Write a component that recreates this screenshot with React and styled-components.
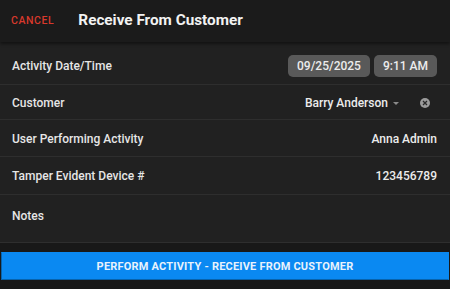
import React from "react";
import styled, { createGlobalStyle } from "styled-components";

const GlobalStyle = createGlobalStyle`
  html, body {
    margin: 0;
    padding: 0;
    background: #181818;
  }
  body {
    font-family: Roboto, "Liberation Sans", sans-serif;
    -webkit-font-smoothing: antialiased;
  }
  * {
    box-sizing: border-box;
  }
`;

const Screen = styled.div`
  width: 450px;
  height: 289px;
  display: flex;
  flex-direction: column;
  background: #181818;
  overflow: hidden;
`;

const Header = styled.header`
  height: 42px;
  flex-shrink: 0;
  display: flex;
  align-items: center;
  padding: 0 11px 2px 11px;
  gap: 24px;
  background: #1b1b1b;
  box-shadow: 0 2px 3px rgba(0, 0, 0, 0.45);
  position: relative;
  z-index: 1;
`;

const Cancel = styled.button`
  background: none;
  border: none;
  padding: 0;
  color: #d8392c;
  font-family: inherit;
  font-size: 10.5px;
  font-weight: 500;
  letter-spacing: 0.6px;
  cursor: pointer;
`;

const Title = styled.h1`
  margin: 0;
  color: #f2f2f2;
  font-size: 15.3px;
  font-weight: 700;
`;

const List = styled.div`
  background: #212121;
`;

const Row = styled.div`
  display: flex;
  align-items: ${({ $top }) => ($top ? "flex-start" : "center")};
  justify-content: space-between;
  height: ${({ $h }) => $h}px;
  padding: ${({ $pt = 2 }) => $pt}px 13px ${({ $pb = 0 }) => $pb}px 12px;
  border-bottom: 1px solid #2e2e2e;
`;

const Label = styled.span`
  color: #e6e6e6;
  font-size: 12px;
  font-weight: 500;
`;

const Value = styled.span`
  color: #ececec;
  font-size: 12px;
  font-weight: 500;
`;

const Chips = styled.div`
  display: flex;
  gap: 4px;
`;

const Chip = styled.span`
  height: 22px;
  display: flex;
  align-items: center;
  justify-content: center;
  padding: 0 9px;
  border-radius: 5px;
  background: #595959;
  color: #ececec;
  font-size: 12px;
  font-weight: 500;
`;

const Picker = styled.div`
  display: flex;
  align-items: center;
`;

const Caret = styled.span`
  width: 0;
  height: 0;
  margin-left: 5px;
  border-left: 3px solid transparent;
  border-right: 3px solid transparent;
  border-top: 3.5px solid #8a8a8a;
`;

const Clear = styled.span`
  width: 10px;
  height: 10px;
  margin-left: 21px;
  margin-right: 7px;
  border-radius: 50%;
  background: #9b9b9b;
  display: flex;
  align-items: center;
  justify-content: center;
`;

const Footer = styled.div`
  flex: 1;
  padding: 9px 1px 0 1px;
  background: #181818;
`;

const ActionButton = styled.button`
  width: 100%;
  height: 28px;
  background: #0a89f2;
  border: 1px solid #0763ad;
  border-top-color: #0a89f2;
  border-right-color: #0a89f2;
  color: #e8f2fc;
  font-family: inherit;
  font-size: 11px;
  font-weight: 700;
  letter-spacing: 0.2px;
  cursor: pointer;
`;

export default function App() {
  return (
    <Screen>
      <GlobalStyle />
      <Header>
        <Cancel>CANCEL</Cancel>
        <Title>Receive From Customer</Title>
      </Header>
      <List>
        <Row $h={43} $pt={6}>
          <Label>Activity Date/Time</Label>
          <Chips>
            <Chip>09/25/2025</Chip>
            <Chip>9:11 AM</Chip>
          </Chips>
        </Row>
        <Row $h={35}>
          <Label>Customer</Label>
          <Picker>
            <Value>Barry Anderson</Value>
            <Caret />
            <Clear>
              <svg width="6" height="6" viewBox="0 0 6 6">
                <path d="M1 1L5 5M5 1L1 5" stroke="#2a2a2a" strokeWidth="1.3" />
              </svg>
            </Clear>
          </Picker>
        </Row>
        <Row $h={37}>
          <Label>User Performing Activity</Label>
          <Value>Anna Admin</Value>
        </Row>
        <Row $h={38} $pb={2}>
          <Label>Tamper Evident Device #</Label>
          <Value>123456789</Value>
        </Row>
        <Row $h={48} $top $pt={14}>
          <Label>Notes</Label>
        </Row>
      </List>
      <Footer>
        <ActionButton>PERFORM ACTIVITY - RECEIVE FROM CUSTOMER</ActionButton>
      </Footer>
    </Screen>
  );
}
